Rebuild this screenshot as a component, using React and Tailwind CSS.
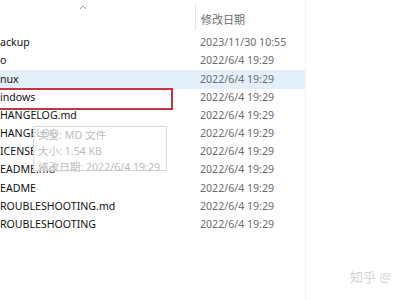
const rows = [
  { name: "ackup", date: "2023/11/30 10:55" },
  { name: "o", date: "2022/6/4 19:29" },
  { name: "nux", date: "2022/6/4 19:29", hover: true },
  { name: "indows", date: "2022/6/4 19:29", boxed: true },
  { name: "HANGELOG.md", date: "2022/6/4 19:29" },
  { name: "HANGELOG", date: "2022/6/4 19:29" },
  { name: "ICENSE", date: "2022/6/4 19:29" },
  { name: "EADME.md", date: "2022/6/4 19:29" },
  { name: "EADME", date: "2022/6/4 19:29" },
  { name: "ROUBLESHOOTING.md", date: "2022/6/4 19:29" },
  { name: "ROUBLESHOOTING", date: "2022/6/4 19:29" },
];

export default function App() {
  return (
    <div
      className="relative w-[399px] h-[300px] overflow-hidden bg-white"
      style={{ fontFamily: '"Noto Sans", "Noto Sans CJK SC", sans-serif' }}
    >
      {/* faint column edge */}
      <div className="absolute left-[305px] top-0 h-full w-px bg-[#f3f3f3]" />

      {/* header */}
      <div className="flex h-[34px] w-[305px]">
        <div className="relative w-[195px]">
          <svg className="absolute left-[79px] top-[4px]" width="8" height="6" viewBox="0 0 8 6" fill="none">
            <path d="M1 5L4 2L7 5" stroke="#9a9a9a" strokeWidth="1" />
          </svg>
        </div>
        <div className="flex items-start pt-[8px] border-l border-[#e5e5e5] h-[26px] mt-[4px] pl-[5px] text-[11px] text-[#6b6b6b]">
          修改日期
        </div>
      </div>

      {/* rows */}
      <div className="flex flex-col">
        {rows.map((r, i) => (
          <div
            key={i}
            className={`relative flex items-center h-[18.2px] w-[305px] text-[10.6px] ${r.hover ? "bg-[#e3f0fb]" : ""}`}
          >
            <div className="w-[200px] text-[#111111] whitespace-nowrap">{r.name}</div>
            <div className="text-[#6d6d6d] whitespace-nowrap">{r.date}</div>
            {r.boxed && (
              <div className="absolute left-[-2px] top-[-1px] w-[175px] h-[22px] border-2 border-[#c33545]" />
            )}
          </div>
        ))}
      </div>

      {/* tooltip fading in */}
      <div className="absolute left-[33px] top-[126px] w-[134px] h-[45px] border border-[#dadada] bg-white/75 px-[4px] text-[10.6px] leading-[16px] text-[#bdbdbd] whitespace-nowrap">
        <div>类型: MD 文件</div>
        <div>大小: 1.54 KB</div>
        <div>修改日期: 2022/6/4 19:29</div>
      </div>

      {/* watermark */}
      <div className="absolute left-[350px] top-[268px] text-[13px] text-[#d4d4d4] whitespace-nowrap">
        知乎 @
      </div>
    </div>
  );
}
